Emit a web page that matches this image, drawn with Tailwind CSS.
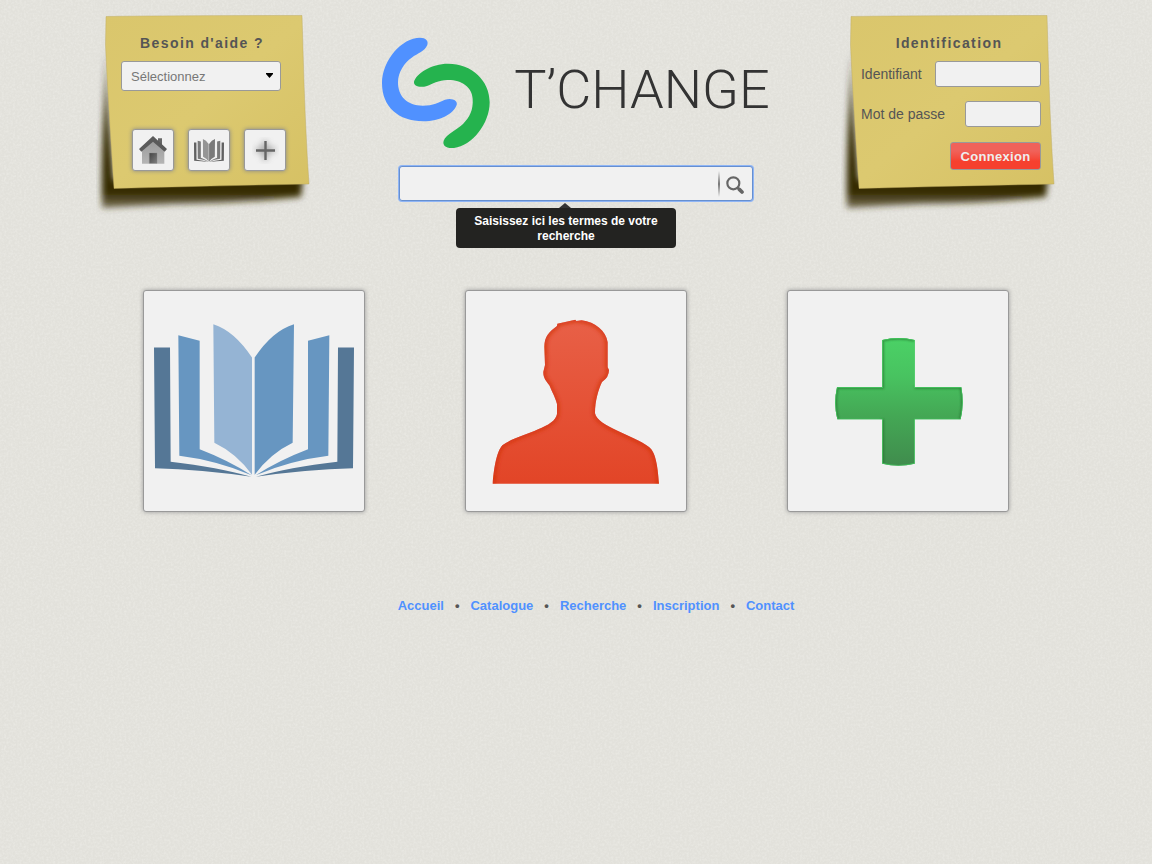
<!DOCTYPE html>
<html lang="fr">
<head>
<meta charset="utf-8">
<meta name="viewport" content="width=device-width, initial-scale=1">
<title>T’CHANGE</title>
<script src="https://cdn.jsdelivr.net/npm/@tailwindcss/browser@4"></script>
</head>
<body class="relative isolate min-h-screen bg-[#e2e1db] font-['Liberation_Sans',Arial,sans-serif] text-sm text-[#555]">

<!-- Paper grain -->
<svg class="absolute inset-0 -z-10 h-full w-full" aria-hidden="true">
  <filter id="grain" x="0" y="0" width="100%" height="100%">
    <feTurbulence type="fractalNoise" baseFrequency="0.45" numOctaves="2" seed="4" stitchTiles="stitch"/>
    <feColorMatrix values="0 0 0 0 1  0 0 0 0 1  0 0 0 0 .97  1.6 0 0 0 -.6"/>
  </filter>
  <rect width="100%" height="100%" filter="url(#grain)" opacity=".3"/>
</svg>

<!-- Shared drawings -->
<svg class="absolute size-0" aria-hidden="true">
  <defs>
    <linearGradient id="paper" x1="0" y1="0" x2="1" y2="1">
      <stop offset="0" stop-color="#dac66c"/><stop offset=".5" stop-color="#dcc970"/><stop offset="1" stop-color="#d6c164"/>
    </linearGradient>
    <filter id="soft" x="-20%" y="-20%" width="140%" height="140%"><feGaussianBlur stdDeviation="3"/></filter>
    <linearGradient id="shade" x1="0" y1="0" x2="0" y2="1">
      <stop offset="0" stop-color="#352a02" stop-opacity=".5"/><stop offset=".4" stop-color="#352a02"/><stop offset=".9" stop-color="#352a02"/><stop offset="1" stop-color="#4a4020" stop-opacity=".7"/>
    </linearGradient>
    <symbol id="note" viewBox="0 0 215 220">
      <path d="M10 50 L13 120 L18 180 L207 178 L205 197 Q150 203 80 204 Q40 206 6 208 Q5 165 8 110Z" fill="url(#shade)" filter="url(#soft)"/>
      <path d="M10 16.500 Q60 15.500 206 15.500 L207 50 Q209 125 213 184 Q110 186 18 188.500 Q12 100 9.500 45Z" fill="url(#paper)" stroke="#b9a75c" stroke-opacity=".6" stroke-width=".7"/>
    </symbol>
    <symbol id="book" viewBox="57 132 600 458">
      <path fill="#557796" d="M57 202H105L107 545Q250 562 349 590Q200 567 60 564Z"/>
      <path fill="#6796c1" d="M130 165L194 182V507Q280 540 350 585Q240 540 133 527Z"/>
      <path fill="#95b4d4" d="M235 132Q298 152 351 232V584Q305 520 238 488Z"/>
      <path fill="#6796c1" d="M477 132Q412 152 359 232V584Q406 520 473 488Z"/>
      <path fill="#6796c1" d="M583 165L519 182V507Q432 540 362 585Q472 540 580 527Z"/>
      <path fill="#557796" d="M657 202H609L607 545Q462 562 363 590Q512 567 654 564Z"/>
    </symbol>
  </defs>
</svg>

<header class="mx-auto flex max-w-[960px] items-start justify-between">

  <section class="relative h-[220px] w-[215px] shrink-0 pt-[34px] pr-6 pl-[25px]">
    <svg class="absolute inset-0 -z-10 h-full w-full" aria-hidden="true"><use href="#note"/></svg>
    <h2 class="pr-1 text-center leading-[18px] font-bold tracking-widest"><label for="aide">Besoin d'aide ?</label></h2>
    <div class="relative mt-[9px] w-[160px]">
      <select id="aide" class="block h-[30px] w-full appearance-none rounded-[3px] border border-[#999] bg-[#f1f1f1] pt-0.5 pl-[9px] text-[13px] text-[#777]">
        <option>Sélectionnez</option>
      </select>
      <svg class="pointer-events-none absolute top-3 right-2 h-[5px] w-[7px]" viewBox="0 0 7 5" aria-hidden="true"><path d="M0 0H7V1L3.500 5L0 1Z" fill="#000"/></svg>
    </div>
    <nav class="mt-[38px] ml-[11px] flex gap-[14px]" aria-label="Raccourcis">
      <a href="#" aria-label="Accueil" class="flex size-[42px] shrink-0 items-center justify-center rounded-[3px] border border-[#999] bg-[#f1f1f1] shadow-[0_0_4px_#888]">
        <svg class="size-7" viewBox="0 0 84 84" aria-hidden="true">
          <defs><linearGradient id="wall" x1="0" y1="0" x2="0" y2="1"><stop offset="0" stop-color="#999"/><stop offset="1" stop-color="#b5b5b5"/></linearGradient>
          <linearGradient id="door" x1="0" y1="0" x2="1" y2="1"><stop offset="0" stop-color="#444"/><stop offset="1" stop-color="#808080"/></linearGradient></defs>
          <path fill="#666" d="M57 7H69V32L57 20Z"/>
          <path fill="url(#wall)" d="M42 12L76 43V83H9V43Z"/>
          <path fill="#5a5a5a" d="M42 0L84 39L77 47L42 17L7 47L0 39Z"/>
          <path fill="url(#door)" stroke="#888" stroke-width="1" d="M31 51H54V82H31Z"/>
        </svg>
      </a>
      <a href="#" aria-label="Catalogue" class="flex size-[42px] shrink-0 items-center justify-center rounded-[3px] border border-[#999] bg-[#f1f1f1] shadow-[0_0_4px_#888]">
        <svg class="h-[23px] w-[30px] brightness-85 grayscale" aria-hidden="true"><use href="#book"/></svg>
      </a>
      <a href="#" aria-label="Inscription" class="flex size-[42px] shrink-0 items-center justify-center rounded-[3px] border border-[#999] bg-[#f1f1f1] shadow-[0_0_4px_#888]">
        <svg class="size-[34px]" viewBox="0 0 34 34" aria-hidden="true">
          <path d="M17 8V27M8 17H27" stroke="#888" stroke-width="5" opacity=".7" filter="url(#soft)"/>
          <path d="M17.500 8V27M8 17.500H27" stroke="#666" stroke-width="2.400"/>
        </svg>
      </a>
    </nav>
  </section>

  <div class="flex flex-col items-center pt-[37px]">
    <a href="#" class="flex items-center gap-6">
      <svg class="h-[112px] w-[108px]" viewBox="36 36 324 336" aria-hidden="true">
        <path fill="#5091ff" d="M150 38C168 38 176 48 172 60C165 78 143 85 125 98C103 113 84 142 84 172C84 215 112 242 158 242C190 242 207 231 225 224C248 217 264 228 260 240C251 266 210 289 160 289C85 289 36 245 36 175C36 105 96 38 150 38Z"/>
        <path fill="#25b34e" d="M234 116C306 116 359 167 359 232C359 296 306 363 252 369C226 371 217 360 221 347C229 327 262 314 279 297C299 276 310 255 308 222C307 188 276 165 235 165C207 164 187 177 171 183C148 190 130 182 132 170C139 146 184 116 234 116Z"/>
      </svg>
      <span class="pb-[6px] font-[Roboto,sans-serif] text-[54px] leading-none font-[350] text-[#333]">T’CHANGE</span>
    </a>

    <form class="relative mt-[17px] flex h-[35px] w-[354px] items-center rounded-[3px] border border-[#668fd0] bg-[#f1f1f1] shadow-[0_0_0_1px_#8fb5f5]" role="search">
      <input type="search" aria-label="Recherche" aria-describedby="astuce" class="h-full min-w-0 flex-1 bg-transparent px-3 outline-none">
      <span class="h-[26px] w-0.5 bg-linear-to-b from-transparent via-[#777] to-transparent"></span>
      <button type="submit" aria-label="Rechercher" class="flex h-full w-8 items-center pt-0.5 pl-[6px]">
        <svg class="size-[18px]" viewBox="0 0 54 54" fill="none" stroke="#666" aria-hidden="true"><circle cx="22" cy="22" r="18" stroke-width="6.500"/><path d="M35 35L40 40" stroke-width="7"/><path d="M40 40L48 48" stroke-width="11" stroke-linecap="round"/></svg>
      </button>
      <div id="astuce" role="tooltip" class="absolute top-[41px] left-14 w-[220px] rounded-sm bg-[#232321] px-3 pt-[6px] pb-1 text-center text-xs leading-[15px] font-bold text-white">
        <svg class="absolute -top-[5px] left-[103px] h-[5px] w-3" viewBox="0 0 12 5" aria-hidden="true"><path d="M0 5L6 0L12 5Z" fill="#333"/></svg>
        Saisissez ici les termes de votre recherche
      </div>
    </form>
  </div>

  <section class="relative h-[220px] w-[215px] shrink-0 pt-[34px] pr-[15px] pl-5">
    <svg class="absolute inset-0 -z-10 h-full w-full" aria-hidden="true"><use href="#note"/></svg>
    <h2 class="pr-1 text-center leading-[18px] font-bold tracking-widest">Identification</h2>
    <form class="mt-[9px] flex flex-col gap-[14px]">
      <div class="flex items-center justify-between">
        <label for="login">Identifiant</label>
        <input id="login" type="text" class="h-[26px] w-[106px] rounded-[3px] border border-[#999] bg-[#f1f1f1] px-2">
      </div>
      <div class="flex items-center justify-between">
        <label for="pass">Mot de passe</label>
        <input id="pass" type="password" class="h-[26px] w-[76px] rounded-[3px] border border-[#999] bg-[#f1f1f1] px-2">
      </div>
      <button type="submit" class="mt-px h-7 w-[91px] self-end rounded-[3px] border border-[#999] bg-linear-to-b from-[#f0625a] from-30% to-[#f6402e] to-70% pt-0.5 text-[13px] font-bold tracking-wide text-[#eee]">Connexion</button>
    </form>
  </section>
</header>

<main class="mx-auto mt-[70px] flex max-w-[960px] flex-wrap justify-center gap-[100px]">
  <a href="#" aria-label="Catalogue" class="flex size-[222px] items-start justify-center rounded-[3px] border border-[#999] bg-[#f1f1f1] pt-[33px] shadow-[0_0_4px_#999]">
    <svg class="h-[153px] w-[200px]" aria-hidden="true"><use href="#book"/></svg>
  </a>
  <a href="#" aria-label="Membres" class="block size-[222px] rounded-[3px] border border-[#999] bg-[#f1f1f1] shadow-[0_0_4px_#999]">
    <svg class="h-full w-full" viewBox="27 33 660 660" aria-hidden="true">
      <defs>
        <linearGradient id="red" x1="0" y1="0" x2="0" y2="1"><stop offset="0" stop-color="#e86047"/><stop offset="1" stop-color="#e24527"/></linearGradient>
        <clipPath id="bust"><path id="bustShape" d="M301 131L355 119L358 123L374 121C415 126 447 153 452 187V262L456 270Q456 292 435 306C424 330 414 362 414 400C422 440 528 465 576 501C598 517 603 570 606 611H107C110 575 117 517 136 496C180 462 294 446 300 402V372C294 350 286 338 277 316C267 303 258 293 259 275L264 255L262 200C262 170 276 156 300 138Z"/></clipPath>
        <filter id="edge"><feGaussianBlur stdDeviation="7"/></filter>
      </defs>
      <use href="#bustShape" fill="url(#red)"/>
      <g clip-path="url(#bust)"><path d="M107 660C107 575 117 517 136 496C180 462 294 446 300 402V372C294 350 286 338 277 316C267 303 258 293 259 275L264 255L262 200C262 170 276 156 300 138L301 131L355 119L374 121C415 126 447 153 452 187V262L456 270Q456 292 435 306C424 330 414 362 414 400C422 440 528 465 576 501C598 517 606 570 606 660" fill="none" stroke="#d2330f" stroke-width="11" filter="url(#edge)"/></g>
    </svg>
  </a>
  <a href="#" aria-label="Inscription" class="block size-[222px] rounded-[3px] border border-[#999] bg-[#f1f1f1] shadow-[0_0_4px_#999]">
    <svg class="h-full w-full" viewBox="27 33 660 660" aria-hidden="true">
      <defs>
        <linearGradient id="green" x1="0" y1="0" x2="0" y2="1"><stop offset="0" stop-color="#4bd166"/><stop offset=".3" stop-color="#48c360"/><stop offset=".6" stop-color="#44a855"/><stop offset="1" stop-color="#408c4d"/></linearGradient>
        <clipPath id="cross"><path id="crossShape" d="M310 180Q358 168 407 180V322H547Q556 370 545 418H407V551Q358 563 310 551V418H175Q163 370 174 322H310Z"/></clipPath>
      </defs>
      <use href="#crossShape" fill="url(#green)"/>
      <g clip-path="url(#cross)" fill="none">
        <path d="M310 551V418M175 418Q163 370 174 322H310V180Q358 168 407 180M407 322H547Q556 370 545 418" stroke="#27702f" stroke-width="9" opacity=".7" filter="url(#soft)"/>
        <use href="#crossShape" stroke="#3fc95c" stroke-width="4"/>
      </g>
    </svg>
  </a>
</main>

<footer class="mt-[86px] pb-8 pl-10">
  <nav class="flex flex-wrap justify-center gap-x-[11px] text-[13px] leading-4 font-bold" aria-label="Pied de page">
    <a href="#" class="text-[#5091ff]">Accueil</a>
    <span>•</span>
    <a href="#" class="text-[#5091ff]">Catalogue</a>
    <span>•</span>
    <a href="#" class="text-[#5091ff]">Recherche</a>
    <span>•</span>
    <a href="#" class="text-[#5091ff]">Inscription</a>
    <span>•</span>
    <a href="#" class="text-[#5091ff]">Contact</a>
  </nav>
</footer>
</body>
</html>
